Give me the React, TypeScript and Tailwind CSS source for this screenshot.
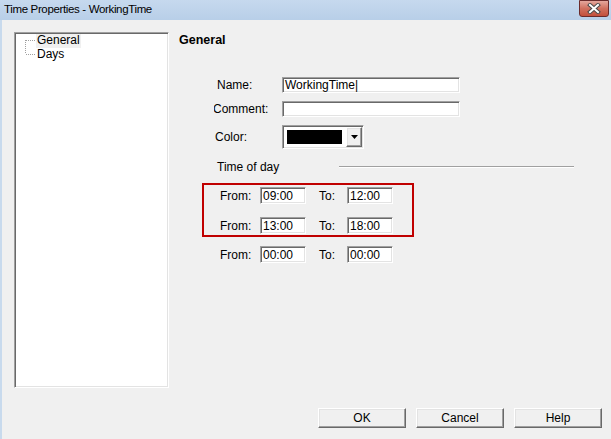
import React from "react";

const sunken =
  "border border-t-[#a0a0a0] border-l-[#a0a0a0] border-r-white border-b-white shadow-[inset_1px_1px_0_#696969,inset_-1px_-1px_0_#e3e3e3] bg-white";
const raised =
  "border border-t-white border-l-white border-r-[#696969] border-b-[#696969] shadow-[inset_-1px_-1px_0_#a0a0a0,inset_1px_1px_0_#e3e3e3] bg-[#f0f0f0]";

function CloseButton() {
  return (
    <div className="w-[30px] h-[17px] rounded-b-[3px] border border-[#6b2b2b] bg-gradient-to-b from-[#e4a79d] via-[#d0705f] to-[#c34f3b] flex items-center justify-center">
      <svg width="14" height="11" viewBox="0 0 14 11">
        <path d="M3 2 L11 9 M11 2 L3 9" stroke="#4a4a4a" strokeWidth="4" strokeLinecap="square" />
        <path d="M3 2 L11 9 M11 2 L3 9" stroke="#ffffff" strokeWidth="2" strokeLinecap="square" />
      </svg>
    </div>
  );
}

function TreeItem({ label, first, selected }: { label: string; first?: boolean; selected?: boolean }) {
  return (
    <div className="flex items-stretch h-[14px]">
      <svg width="20" height="14" viewBox="0 0 20 14" className="shrink-0">
        <line x1="9.5" y1={first ? 6 : 0} x2="9.5" y2={first ? 14 : 6} stroke="#a0a0a0" strokeDasharray="1 1" />
        <line x1="10" y1="6.5" x2="20" y2="6.5" stroke="#a0a0a0" strokeDasharray="1 1" />
      </svg>
      <span className={`px-[1px] leading-[13px] ${selected ? "bg-[#f0f0f0]" : ""}`}>{label}</span>
    </div>
  );
}

function TextBox({ value, w, h }: { value: string; w: string; h: string }) {
  return (
    <div className={`${sunken} ${w} ${h} flex items-center pl-[2px] leading-none overflow-hidden`}>
      {value}
    </div>
  );
}

function TimeRow({ from, to }: { from: string; to: string }) {
  return (
    <div className="flex items-center h-[17px]">
      <span className="w-[40px]">From:</span>
      <TextBox value={from} w="w-[46px]" h="h-[17px]" />
      <span className="w-[41px] pl-[13px]">To:</span>
      <TextBox value={to} w="w-[46px]" h="h-[17px]" />
    </div>
  );
}

function DialogButton({ label }: { label: string }) {
  return (
    <button className={`${raised} w-[88px] h-[20px] flex items-center justify-center text-[12px] text-black`}>
      {label}
    </button>
  );
}

export default function App() {
  return (
    <div className="w-[611px] h-[439px] bg-[#f0f0f0] flex flex-col text-[12px] text-black font-['Liberation_Sans',Arial,sans-serif] overflow-hidden">
      {/* TITLE BAR */}
      <div className="h-[20px] shrink-0 bg-gradient-to-b from-[#c6d9ee] to-[#b8cfe8] flex items-start justify-between pl-[4px] pr-[2px]">
        <span className="text-[11.5px] leading-[18px] tracking-[-0.35px]">Time Properties - WorkingTime</span>
        <CloseButton />
      </div>

      {/* BODY */}
      <div className="flex-1 flex flex-col border-l-2 border-[#c8daed]">
        <div className="flex pt-[12px]">
          {/* TREE */}
          <div className={`${sunken} ml-[12px] w-[155px] h-[356px] pt-[1px] pl-[1px]`}>
            <TreeItem label="General" first selected />
            <TreeItem label="Days" />
          </div>

          {/* FORM */}
          <div className="ml-[10px] flex-1 flex flex-col">
            <div className="font-bold text-[12.5px] leading-[16px]">General</div>

            <div className="mt-[29px] pl-[35px] flex flex-col">
              <div className="flex items-center h-[16px]">
                <span className="w-[68px] pl-[3px]">Name:</span>
                <TextBox value="WorkingTime|" w="w-[178px]" h="h-[16px]" />
              </div>
              <div className="flex items-center h-[16px] mt-[8px]">
                <span className="w-[68px] overflow-hidden">
                  <span className="block -ml-[1px]">Comment:</span>
                </span>
                <TextBox value="" w="w-[178px]" h="h-[16px]" />
              </div>
              <div className="flex items-center h-[24px] mt-[8px]">
                <span className="w-[68px] pl-[1px]">Color:</span>
                <div className={`${sunken} w-[82px] h-[24px] flex items-center pl-[4px] pr-[1px]`}>
                  <div className="w-[55px] h-[14px] bg-black" />
                  <div className={`${raised} ml-auto w-[16px] h-[20px] flex items-center justify-center`}>
                    <svg width="7" height="4" viewBox="0 0 7 4">
                      <path d="M0 0 H7 L3.5 4 Z" fill="#000" />
                    </svg>
                  </div>
                </div>
              </div>
            </div>

            <div className="mt-[10px] pl-[38px] flex items-center h-[16px] pr-[37px]">
              <span>Time of day</span>
              <div className="ml-auto w-[235px] h-[2px] border-t border-t-[#a0a0a0] border-b border-b-white" />
            </div>

            <div className="mt-[8px] ml-[23px] w-[212px] h-[54px] border-2 border-[#c00000] pl-[16px] pt-[2px] flex flex-col gap-[13px]">
              <TimeRow from="09:00" to="12:00" />
              <TimeRow from="13:00" to="18:00" />
            </div>

            <div className="mt-[9px] ml-[41px]">
              <TimeRow from="00:00" to="00:00" />
            </div>
          </div>
        </div>

        {/* BUTTONS */}
        <div className="mt-[20px] flex justify-end gap-[10px] pr-[9px]">
          <DialogButton label="OK" />
          <DialogButton label="Cancel" />
          <DialogButton label="Help" />
        </div>
      </div>
    </div>
  );
}
